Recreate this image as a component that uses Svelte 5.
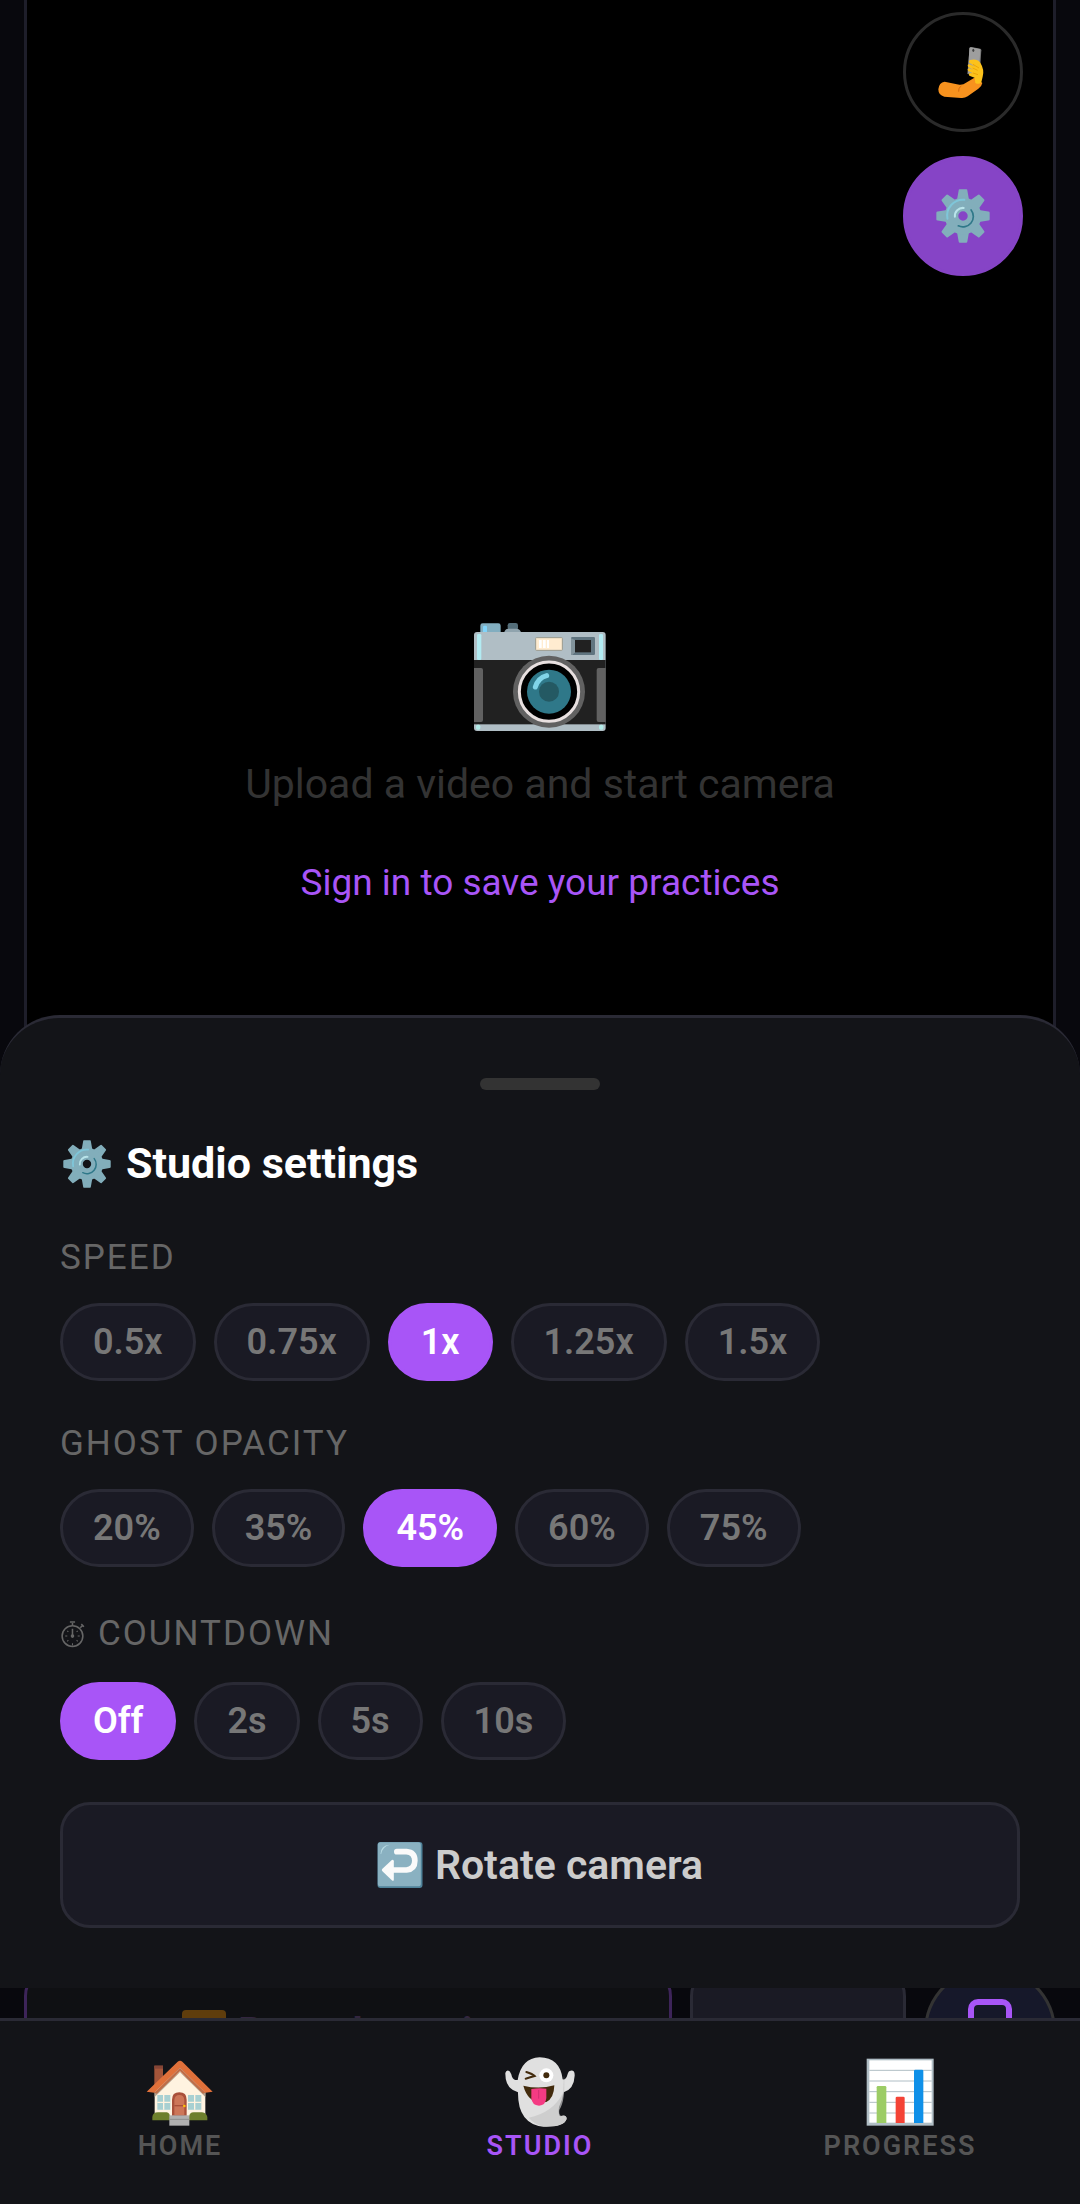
<script lang="ts">
	let speed = $state('1x');
	let opacity = $state('45%');
	let countdown = $state('Off');
	let tab = $state('studio');

	const speeds = ['0.5x', '0.75x', '1x', '1.25x', '1.5x'];
	const opacities = ['20%', '35%', '45%', '60%', '75%'];
	const countdowns = ['Off', '2s', '5s', '10s'];
	const teeth = [0, 45, 90, 135, 180, 225, 270, 315];
</script>

{#snippet gear()}
	<svg class="gear" viewBox="0 0 160 160" aria-hidden="true">
		<g fill="#82aebb">
			{#each teeth as angle}
				<path d="M70 1h20q3 0 3 4l5 28H62l5-28q0-4 3-4z" transform="rotate({angle} 80 80)" />
			{/each}
		</g>
		<circle cx="80" cy="80" r="34" fill="none" stroke="#82aebb" stroke-width="40" />
		<path d="M34 88A47 47 0 0 1 84 32" fill="none" stroke="#7fc6d9" stroke-width="6" stroke-linecap="round" />
		<path d="M56 82A24 24 0 0 1 82 56" fill="none" stroke="#b9e4ea" stroke-width="6" stroke-linecap="round" />
		<path d="M104 62A31 31 0 0 1 66 109" fill="none" stroke="#2f7889" stroke-width="5" stroke-linecap="round" />
	</svg>
{/snippet}

{#snippet chips(options: string[], current: string, pick: (v: string) => void)}
	<div class="chips">
		{#each options as option}
			<button class="chip" class:active={option === current} aria-pressed={option === current} onclick={() => pick(option)}>{option}</button>
		{/each}
	</div>
{/snippet}

<main class="page">
	<section class="stage">
		<div class="stage-tools">
			<button class="round-btn" aria-label="Flip camera">
				<svg class="selfie" viewBox="227 135 162 162" aria-hidden="true">
					<path d="M328 143l5-2 27 5q3 1 3 5l-5 74-37-3z" fill="#757575" />
					<path d="M331 142l27 5q3 1 2 5l-5 70-32-2 4-75q1-3 4-3z" fill="#9e9e9e" />
					<ellipse cx="339" cy="151" rx="3" ry="5" fill="#424242" />
					<path d="M253 245l44 9q12 1 20-6l29-17 20 18q-2 11-12 17l-32 23q-9 6-20 5l-50-4q-18-4-18-22 2-21 19-23z" fill="#f7921e" />
					<path d="M303 258q-10 5-8 17" fill="none" stroke="#d4690e" stroke-width="3" />
					<path d="M329 180q20-6 31 8 13 21 7 42l-4 17q-7 8-18 2l-2-16-16-6q-4-4 1-8l9 1-13-7q-5-6 2-8l13 5-16-10q-3-7 4-7l18 7-17-11q-5-5 1-9z" fill="#fcc21b" />
					<path d="M338 193l18 11M337 204l15 7M338 219l15 5" fill="none" stroke="#e59600" stroke-width="2" />
				</svg>
			</button>
			<button class="round-btn on" aria-label="Studio settings">{@render gear()}</button>
		</div>
		<div class="placeholder">
			<svg class="camera" viewBox="102 99 396 324" aria-hidden="true">
				<rect x="121" y="100" width="61" height="34" rx="7" fill="#82aec0" />
				<rect x="129" y="107" width="12" height="22" rx="4" fill="#81d4fa" />
				<rect x="203" y="99" width="31" height="22" rx="7" fill="#546e7a" />
				<path d="M192 130q2-14 13-14h26q11 2 13 14z" fill="#90a4ae" />
				<rect x="102" y="126" width="395" height="297" rx="9" fill="#b0bec5" />
				<rect x="111" y="132" width="13" height="78" rx="4" fill="#b2ebf2" />
				<rect x="477" y="132" width="12" height="78" rx="4" fill="#b2ebf2" />
				<rect x="102" y="210" width="395" height="193" fill="#212121" />
				<path d="M102 234h21q6 0 6 6v150q0 6-6 6h-21zM497 234h-21q-6 0-6 6v150q0 6 6 6h21z" fill="#616161" />
				<rect x="287" y="143" width="80" height="38" rx="2" fill="#ffecd0" stroke="#9a9b8f" stroke-width="3" />
				<path d="M297 150h8v24h-8zM309 150h8v24h-8zM321 150h6v24h-6z" fill="#fff" />
				<rect x="393" y="141" width="72" height="54" rx="4" fill="#607580" />
				<path d="M393 145l12 5v37l-8 8q-4 0-4-4z" fill="#82939b" />
				<rect x="405" y="150" width="48" height="37" fill="#212121" />
				<circle cx="327" cy="305" r="108" fill="#616161" />
				<circle cx="327" cy="305" r="89" fill="#000" stroke="#e8e0e0" stroke-width="9" />
				<circle cx="327" cy="305" r="66" fill="#2f7889" />
				<circle cx="327" cy="305" r="30" fill="#245963" />
				<path d="M286 291q8-27 34-34" fill="none" stroke="#81d4e8" stroke-width="15" stroke-linecap="round" />
				<rect x="108" y="404" width="13" height="15" rx="5" fill="#b2ebe8" />
				<rect x="477" y="404" width="13" height="15" rx="5" fill="#b2ebe8" />
			</svg>
			<p>Upload a video and start camera</p>
			<a href="#signin">Sign in to save your practices</a>
		</div>
	</section>

	<div class="controls">
		<button class="record" disabled>
			<svg class="rec-icon" viewBox="0 0 44 44" aria-hidden="true">
				<rect width="44" height="44" rx="4" fill="#f59200" />
				<circle cx="22" cy="22" r="12" fill="#fff" />
			</svg>
			Record practice
		</button>
		<button class="reset" disabled>↺ Reset</button>
		<button class="device" aria-label="Upload video">
			<svg viewBox="0 0 44 66" aria-hidden="true">
				<rect x="3" y="3" width="38" height="60" rx="7" fill="none" stroke="#a855f7" stroke-width="6" />
			</svg>
		</button>
	</div>
</main>

<section class="sheet">
	<div class="handle"></div>
	<h2>{@render gear()}Studio settings</h2>

	<h3>Speed</h3>
	{@render chips(speeds, speed, (v) => (speed = v))}

	<h3>Ghost opacity</h3>
	{@render chips(opacities, opacity, (v) => (opacity = v))}

	<h3 class="with-icon">
		<svg class="stopwatch" viewBox="0 0 48 54" aria-hidden="true" fill="none" stroke="#666" stroke-width="3">
			<circle cx="23" cy="31" r="20" />
			<path d="M23 11V6M18 4h10M38 15l4-4M40 8l5 5M23 17v14" />
			<path d="M23 45v4M9 31h4M33 31h4M13 21l2 2M33 21l-2 2M13 41l2-2M33 41l-2-2" stroke-width="2" />
			<circle cx="23" cy="31" r="2" fill="#666" />
		</svg>
		Countdown
	</h3>
	{@render chips(countdowns, countdown, (v) => (countdown = v))}

	<button class="rotate">
		<svg class="return-icon" viewBox="0 0 135 138" aria-hidden="true">
			<rect width="135" height="138" rx="9" fill="#4f8299" />
			<rect x="1" y="1" width="129" height="132" rx="8" fill="#8ab1c1" />
			<path d="M9 36q0-26 28-28-22 6-26 28z" fill="#b9dbe4" />
			<path d="M58 29h29q25 2 25 27t-25 28H42" fill="none" stroke="#fafafa" stroke-width="17" stroke-linecap="round" />
			<path d="M14 81l29-27q6-3 6 4v55q-1 6-6 2L14 87q-2-3 0-6z" fill="#fafafa" />
		</svg>
		Rotate camera
	</button>
</section>

<nav class="tabs">
	<button class="tab" class:active={tab === 'home'} onclick={() => (tab = 'home')}>
		<svg viewBox="74 52 210 210" aria-hidden="true">
			<rect x="102" y="78" width="26" height="60" fill="#a4553a" />
			<rect x="102" y="78" width="26" height="9" fill="#854536" />
			<path d="M103 150l76-68 76 68v86H103z" fill="#fff3e0" />
			<path d="M103 158l76-62 76 62v14l-76-74-76 74z" fill="#b5a28f" />
			<path d="M79 156l93-90q7-6 14 0l91 90-22 3-76-75-77 75z" fill="#e0703a" />
			<path d="M102 159l77-75 76 75-7 3-69-67-70 67z" fill="#bf6d48" />
			<path d="M111 166h39v44h-39zM203 166h40v44h-40z" fill="#a8d0d2" />
			<path d="M130 166v44M111 188h39M223 166v44M203 188h40" stroke="#fff3e0" stroke-width="4" />
			<path d="M155 230v-50q0-22 22-22t22 22v50z" fill="#a9503a" />
			<path d="M162 226v-45q1-15 15-15t15 15v45z" fill="#cd7658" />
			<path d="M162 198h30" stroke="#a9503a" stroke-width="4" />
			<circle cx="192" cy="199" r="4" fill="#ffc107" />
			<path d="M96 242v-10q1-14 17-14h26q10 2 10 14v10zM206 242v-10q1-14 14-14h25q14 2 16 14v10z" fill="#6d7f2c" />
			<path d="M147 227h60v31h-60z" fill="#b0b0b0" />
			<path d="M147 239h60" stroke="#8e8e8e" stroke-width="3" />
		</svg>
		Home
	</button>
	<button class="tab" class:active={tab === 'studio'} onclick={() => (tab = 'studio')}>
		<svg viewBox="1153 52 210 210" aria-hidden="true">
			<path d="M1192 158q-39-11-38-58 3-11 12-6 5 5 8 17 5 12 17 10 11-66 66-68 61 1 69 66 10 2 14-13 3-13 10-13 13-2 12 15-2 40-33 50-4 23-14 44-3 24 3 28 20-8 20 8-8 25-70 23-77-9-76-103z" fill="#e0e0e0" />
			<path d="M1224 234q72-14 103-74l3-54q5 76-14 105-2 13 5 18 17-4 17 8-8 25-70 23-27-6-44-26z" fill="#c6c6c6" opacity="0.7" />
			<path d="M1208 138q47 12 93-1-1 39-24 50-53 10-69-49z" fill="#422b0d" />
			<path d="M1232 148q24-4 45-1v28q-2 22-22 23-21-1-23-22z" fill="#f43b83" />
			<path d="M1254 151v26" stroke="#d32f72" stroke-width="3" />
			<circle cx="1277" cy="107" r="21" fill="#fff" />
			<circle cx="1277" cy="107" r="9" fill="#422b0d" />
			<path d="M1217 97q19 6 25 12-13 4-27 8" fill="none" stroke="#422b0d" stroke-width="6" stroke-linecap="round" />
		</svg>
		Studio
	</button>
	<button class="tab" class:active={tab === 'progress'} onclick={() => (tab = 'progress')}>
		<svg viewBox="253 52 210 210" aria-hidden="true">
			<rect x="258" y="57" width="201" height="201" fill="#b0bec5" />
			<rect x="266" y="62" width="187" height="187" fill="#fff" />
			<path d="M266 92h187M266 124h187M266 156h187M266 188h187M266 220h187" stroke="#b0bec5" stroke-width="3" />
			<path d="M288 250V143q0-4 4-4h21q4 0 4 4v107z" fill="#9ccc65" />
			<path d="M345 250v-75q0-4 4-4h19q4 0 4 4v75z" fill="#f44336" />
			<path d="M400 250V94q0-4 4-4h20q4 0 4 4v156z" fill="#0f90e8" />
		</svg>
		Progress
	</button>
</nav>

<style>
	:global(body) { margin: 0; background: #08080d; }
	button { font-family: inherit; cursor: pointer; margin: 0; }
	.page, .sheet, .tabs { font-family: Roboto, "Noto Sans", sans-serif; box-sizing: border-box; }

	.page { display: flex; flex-direction: column; gap: 30px; height: 100vh; padding: 0 24px 106px; }
	.stage { flex: 1; display: flex; flex-direction: column; background: #000; border: 3px solid #1e1e2a; border-top: none; border-radius: 0 0 48px 48px; }
	.stage-tools { display: flex; flex-direction: column; align-items: flex-end; gap: 24px; padding: 12px 30px 0; }
	.round-btn { width: 120px; height: 120px; padding: 0; border-radius: 50%; border: 3px solid #2a2a2a; background: #000; display: flex; align-items: center; justify-content: center; }
	.round-btn.on { background: #8644c6; border-color: #8644c6; }
	.round-btn .gear { width: 54px; height: 54px; }
	.selfie { width: 54px; height: 54px; }
	.placeholder { display: flex; flex-direction: column; align-items: center; padding-top: 347px; }
	.camera { width: 132px; height: 108px; }
	.placeholder p { margin: 28px 0 0; font-size: 41px; line-height: 50px; color: #333; }
	.placeholder a { margin-top: 52px; font-size: 37px; line-height: 44px; color: #a855f7; text-decoration: none; }

	.controls { display: grid; grid-template-columns: minmax(0, 3fr) minmax(0, 1fr) 132px; gap: 18px; height: 132px; }
	.record, .reset { padding: 0; border: 3px solid #2a2a35; border-radius: 30px; background: #1a1a24; color: #333340; font-size: 36px; font-weight: 600; }
	.record { border-color: #3d2459; background: #0f1013; color: #33263f; font-size: 39px; font-weight: 700; display: flex; align-items: center; justify-content: center; gap: 12px; }
	.rec-icon { width: 44px; height: 44px; opacity: 0.35; }
	.device { padding: 0; border-radius: 50%; border: 3px solid #333; background: #16182a; display: flex; align-items: center; justify-content: center; }
	.device svg { width: 44px; height: 66px; }

	.sheet { position: fixed; left: 0; right: 0; bottom: 216px; padding: 60px; background: #131418; border-top: 3px solid #2a2a35; border-radius: 60px 60px 0 0; }
	.handle { width: 120px; height: 12px; margin: 0 auto; border-radius: 6px; background: #333; }
	h2 { display: flex; align-items: center; gap: 12px; margin: 48px 0; font-size: 43px; line-height: 51px; font-weight: 700; color: #fff; }
	h2 .gear { width: 54px; height: 48px; }
	h3 { display: flex; align-items: center; gap: 12px; margin: 42px 0 24px; font-size: 35px; line-height: 42px; font-weight: 400; letter-spacing: 2px; text-transform: uppercase; color: #666; }
	.with-icon { line-height: 49px; }
	.stopwatch { width: 26px; height: 28px; }
	.chips { display: flex; flex-wrap: wrap; gap: 18px; }
	.chip { padding: 15px 30px; border: 3px solid #2a2a35; border-radius: 60px; background: #1a1a24; color: #777; font-size: 36px; line-height: 42px; font-weight: 600; }
	.chip.active { background: #a855f7; border-color: #a855f7; color: #fff; }
	.rotate { display: flex; align-items: center; justify-content: center; gap: 12px; width: 100%; margin-top: 42px; padding: 36px; border: 3px solid #2a2a35; border-radius: 30px; background: #1a1a24; color: #ccc; font-size: 41px; line-height: 48px; font-weight: 600; }
	.return-icon { width: 46px; height: 46px; }

	.tabs { position: fixed; left: 0; right: 0; bottom: 0; display: flex; height: 186px; border-top: 3px solid #2a2a35; background: #131418; }
	.tab { flex: 1; display: flex; flex-direction: column; align-items: center; gap: 2px; padding: 36px 0 0; border: none; background: none; color: #555; font-size: 27px; line-height: 34px; font-weight: 600; letter-spacing: 2px; text-transform: uppercase; }
	.tab.active { color: #a855f7; }
	.tab svg { width: 70px; height: 70px; }
</style>
